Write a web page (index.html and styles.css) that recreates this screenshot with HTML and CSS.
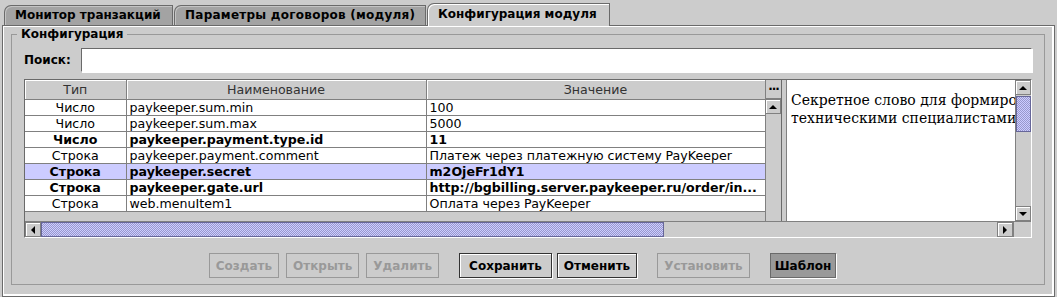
FILE: index.html
```html
<!DOCTYPE html>
<html lang="ru">
<head>
  <meta charset="UTF-8">
  <title>Конфигурация модуля</title>
  <link rel="stylesheet" href="styles.css">
</head>
<body>

  <div class="tabs">
    <div class="tab t-monitor">Монитор транзакций</div>
    <div class="tab t-params">Параметры договоров (модуля)</div>
    <div class="tab t-config active">Конфигурация модуля</div>
  </div>

  <div class="panel">
    <fieldset class="group">
      <legend>Конфигурация</legend>

      <div class="group-body">
        <div class="search">
          <label>Поиск:</label>
          <div class="field"></div>
        </div>

        <div class="pane">
          <div class="split">
            <div class="grid">
              <table>
                <colgroup>
                  <col class="c-type">
                  <col class="c-name">
                  <col class="c-value">
                </colgroup>
                <thead>
                  <tr><th>Тип</th><th>Наименование</th><th>Значение</th></tr>
                </thead>
                <tbody>
                  <tr><td class="type">Число</td><td>paykeeper.sum.min</td><td>100</td></tr>
                  <tr><td class="type">Число</td><td>paykeeper.sum.max</td><td>5000</td></tr>
                  <tr class="set"><td class="type">Число</td><td>paykeeper.payment.type.id</td><td>11</td></tr>
                  <tr><td class="type">Строка</td><td>paykeeper.payment.comment</td><td>Платеж через платежную систему PayKeeper</td></tr>
                  <tr class="set selected"><td class="type">Строка</td><td>paykeeper.secret</td><td>m2OjeFr1dY1</td></tr>
                  <tr class="set"><td class="type">Строка</td><td>paykeeper.gate.url</td><td>http://bgbilling.server.paykeeper.ru/order/in...</td></tr>
                  <tr><td class="type">Строка</td><td>web.menuItem1</td><td>Оплата через PayKeeper</td></tr>
                </tbody>
              </table>
            </div>

            <div class="vbar">
              <div class="corner">...</div>
              <div class="arrow"><span class="tri up"></span></div>
              <div class="track"></div>
            </div>

            <div class="divider"></div>

            <div class="desc">
              <p>Секретное слово для формиро<br>техническими специалистами</p>
            </div>

            <div class="vbar">
              <div class="arrow"><span class="tri up"></span></div>
              <div class="thumb v"></div>
              <div class="track"></div>
              <div class="arrow"><span class="tri down"></span></div>
            </div>
          </div>

          <div class="hbar">
            <div class="arrow"><span class="tri left"></span></div>
            <div class="thumb h"></div>
            <div class="track"></div>
            <div class="arrow"><span class="tri right"></span></div>
            <div class="gap"></div>
          </div>
        </div>

        <div class="buttons">
          <button class="btn" disabled>Создать</button>
          <button class="btn" disabled>Открыть</button>
          <button class="btn" disabled>Удалить</button>
          <button class="btn first wide">Сохранить</button>
          <button class="btn near">Отменить</button>
          <button class="btn first" disabled>Установить</button>
          <button class="btn first pressed">Шаблон</button>
        </div>
      </div>
    </fieldset>
  </div>

</body>
</html>
```

FILE: styles.css
```css
body {
  margin: 0;
  background-color: #cccccc;
  color: #000000;
  font-family: 'DejaVu Sans', sans-serif;
  font-size: 12px;
}

/* tabs */

.tabs {
  display: flex;
  align-items: flex-end;
  height: 25px;
  padding-left: 4px;
  box-sizing: border-box;
}

.tab {
  height: 20px;
  line-height: 19px;
  padding-left: 10px;
  margin-right: 1px;
  background-color: #a3a3a3;
  border: 1px solid #6a6a6a;
  border-bottom: none;
  border-top-left-radius: 7px 7px;
  box-shadow: inset 1px 1px 0 #c4c4c4;
  box-sizing: border-box;
  font-weight: bold;
  white-space: nowrap;
}

.t-monitor { width: 169px; }
.t-params { width: 252px; letter-spacing: 0.25px; }
.t-config { width: 183px; }

.tab.active {
  height: 23px;
  line-height: 21px;
  margin-bottom: -1px;
  background-color: #cccccc;
  box-shadow: inset 1px 1px 0 #ffffff;
}

/* tab content */

.panel {
  margin: 0 2px;
  height: 272px;
  border: 1px solid #6a6a6a;
  box-shadow: inset 1px 1px 0 #ffffff, inset -2px -2px 0 #ffffff;
  box-sizing: border-box;
  padding: 1px 9px 0 8px;
}

.group {
  min-width: 0;
  margin: 0;
  padding: 0;
  border: 1px solid #999999;
}

.group legend {
  font-weight: bold;
  line-height: 14px;
  padding: 0 4px;
  margin-left: 5px;
}

.group-body {
  padding: 0 12px 6px 12px;
}

.search {
  display: flex;
  align-items: center;
  margin-top: 7px;
}

.search label {
  width: 57px;
  font-weight: bold;
}

.field {
  flex: 1;
  height: 24px;
  background-color: #ffffff;
  border: 1px solid #6a6a6a;
  border-right-color: #ffffff;
  border-bottom-color: #ffffff;
  box-shadow: 1px 1px 0 #ffffff;
  box-sizing: border-box;
}

/* table + description */

.pane {
  margin-top: 7px;
  border: 1px solid #ffffff;
  border-top-color: #6a6a6a;
  border-left-color: #6a6a6a;
}

.split {
  display: flex;
  height: 141px;
}

.grid {
  width: 740px;
  flex-shrink: 0;
  background-color: #cccccc;
  overflow: hidden;
}

table {
  border-collapse: collapse;
  table-layout: fixed;
  width: 740px;
  font-size: 12.6px;
}

.c-type { width: 101px; }
.c-name { width: 300px; }
.c-value { width: 339px; }

th {
  height: 19px;
  padding: 0;
  font-weight: normal;
  color: #333333;
  border-right: 1px solid #808080;
  border-bottom: 1px solid #808080;
  box-shadow: inset 1px 1px 0 #ffffff;
  box-sizing: border-box;
}

td {
  height: 15px;
  padding: 0 3px;
  line-height: 15px;
  background-color: #ffffff;
  border-right: 1px solid #808080;
  border-bottom: 1px solid #808080;
  white-space: nowrap;
  overflow: hidden;
}

td.type {
  text-align: center;
}

tr.set td {
  font-weight: bold;
}

tr.selected td {
  background-color: #ccccff;
}

.vbar {
  display: flex;
  flex-direction: column;
  flex-shrink: 0;
  width: 16px;
  background-color: #cccccc;
  border-left: 1px solid #808080;
  box-sizing: border-box;
}

.vbar .corner {
  height: 19px;
  line-height: 13px;
  text-align: center;
  font-weight: bold;
  letter-spacing: -1px;
  border-bottom: 1px solid #808080;
  box-sizing: border-box;
}

.vbar .arrow {
  height: 15px;
}

.vbar .track {
  flex: 1;
}

.divider {
  flex-shrink: 0;
  width: 6px;
  border-left: 1px solid #6a6a6a;
  border-right: 1px solid #808080;
  box-sizing: border-box;
}

.desc {
  flex: 1;
  min-width: 0;
  background-color: #ffffff;
  overflow: hidden;
}

.desc p {
  margin: 11px 0 0 4px;
  font-family: 'DejaVu Serif', serif;
  font-size: 14px;
  line-height: 18px;
  white-space: nowrap;
}

.arrow {
  display: flex;
  align-items: center;
  justify-content: center;
  width: 15px;
  background-color: #cccccc;
  border: 1px solid #808080;
  box-shadow: inset 1px 1px 0 #ffffff;
  box-sizing: border-box;
}

.vbar .arrow {
  width: auto;
  border-left: none;
}

.tri {
  width: 0;
  height: 0;
  border: 4px solid transparent;
}

.tri.up { border-bottom-color: #000000; border-top-width: 0; }
.tri.down { border-top-color: #000000; border-bottom-width: 0; }
.tri.left { border-right-color: #000000; border-left-width: 0; }
.tri.right { border-left-color: #000000; border-right-width: 0; }

.thumb {
  background-color: #ccccff;
  background-image: repeating-conic-gradient(#ccccff 0 25%, #9999cc 0 50%);
  background-size: 2px 2px;
  border: 1px solid #666699;
  box-sizing: border-box;
}

.thumb.v {
  height: 36px;
  margin-top: 1px;
}

.hbar {
  display: flex;
  height: 15px;
  border-top: 1px solid #808080;
}

.hbar .arrow {
  height: 15px;
  width: 16px;
}

.thumb.h {
  width: 623px;
}

.hbar .track {
  flex: 1;
}

.hbar .gap {
  width: 17px;
  border-left: 1px solid #808080;
}

/* buttons */

.buttons {
  display: flex;
  justify-content: center;
  padding-right: 11px;
  margin-top: 15px;
}

.btn {
  height: 25px;
  padding: 0 6px;
  margin-left: 7px;
  font-family: 'DejaVu Sans', sans-serif;
  font-size: 12px;
  font-weight: bold;
  color: #000000;
  background-color: #cccccc;
  border: 1px solid #333333;
  box-shadow: 1px 1px 0 #ffffff, inset 1px 1px 0 #ffffff;
  box-sizing: border-box;
}

.btn:first-child {
  margin-left: 0;
}

.btn.first {
  margin-left: 20px;
}

.btn.near {
  margin-left: 5px;
}

.btn.wide {
  padding: 0 9px;
}

.btn:disabled {
  color: #999999;
  border-color: #999999;
  box-shadow: none;
}

.btn.pressed {
  padding: 0 4px;
  background-color: #999999;
  border-color: #6a6a6a;
  box-shadow: 1px 1px 0 #ffffff;
}
```
